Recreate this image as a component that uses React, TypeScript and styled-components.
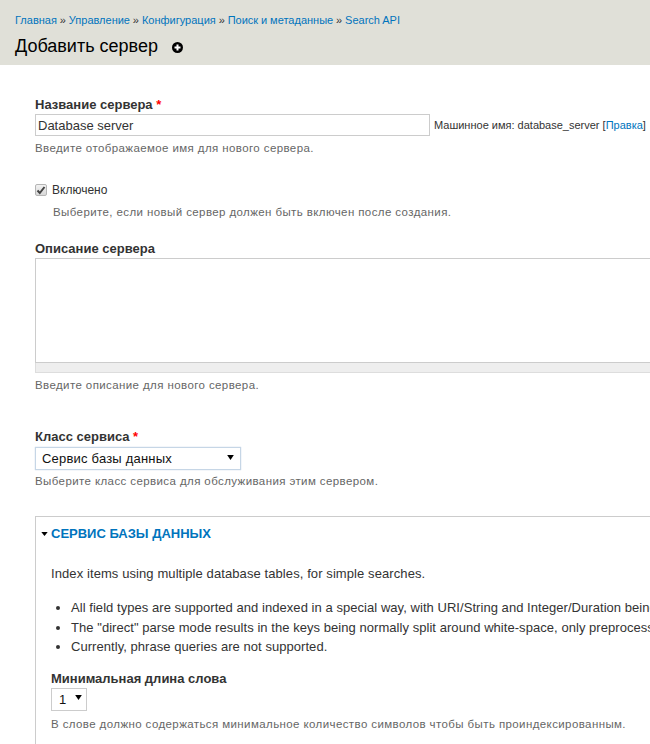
import React from "react";
import styled, { createGlobalStyle } from "styled-components";

const GlobalStyle = createGlobalStyle`
  html, body {
    margin: 0;
    padding: 0;
    background: #fff;
    overflow: hidden;
  }
  body {
    font-family: "Liberation Sans", Arial, sans-serif;
    color: #333;
  }
`;

const Page = styled.div`
  width: 650px;
  height: 744px;
  overflow: hidden;
`;

const Header = styled.header`
  height: 65px;
  box-sizing: border-box;
  background: #e0e0d8;
  padding: 13px 0 0 15px;
`;

const Breadcrumb = styled.div`
  font-size: 11px;
  line-height: 14px;
  color: #333;
  word-spacing: -0.15px;
  white-space: nowrap;
`;

const Link = styled.a`
  color: #0074bd;
  text-decoration: none;
`;

const TitleRow = styled.div`
  display: flex;
  align-items: center;
  gap: 14px;
  margin-top: 7px;
`;

const Title = styled.h1`
  margin: 0;
  font-size: 18px;
  font-weight: 400;
  line-height: 24px;
  color: #000;
`;

const Shortcut = styled.svg`
  width: 11px;
  height: 11px;
  margin-top: 3px;
`;

const Content = styled.main`
  padding: 32px 0 0 35px;
  width: 1000px;
`;

const Field = styled.div<{ $gap?: number }>`
  margin-bottom: ${(p) => p.$gap ?? 0}px;
`;

const Label = styled.label`
  display: block;
  font-size: 13px;
  line-height: 15px;
  font-weight: 700;
  color: #333;
`;

const Required = styled.span`
  color: #f00;
`;

const Inline = styled.div`
  display: flex;
  align-items: center;
  gap: 4px;
  margin-top: 2px;
`;

const TextInput = styled.input`
  width: 395px;
  height: 22px;
  box-sizing: border-box;
  border: 1px solid #ccc;
  padding: 0 2px;
  font: 13px "Liberation Sans", Arial, sans-serif;
  color: #333;
  outline: none;
`;

const MachineName = styled.span`
  font-size: 11px;
  color: #333;
  white-space: nowrap;
`;

const Help = styled.div<{ $indent?: number; $top?: number }>`
  font-size: 11.5px;
  line-height: 14px;
  letter-spacing: 0.4px;
  color: #666;
  margin-top: ${(p) => p.$top ?? 5}px;
  margin-left: ${(p) => p.$indent ?? 0}px;
  white-space: nowrap;
`;

const CheckRow = styled.div`
  display: flex;
  align-items: center;
  gap: 5px;
  font-size: 12px;
  line-height: 14px;
  color: #333;
  margin-bottom: 8px;
`;

const CheckBox = styled.span`
  width: 12px;
  height: 12px;
  box-sizing: border-box;
  border: 1px solid #b5b5b5;
  border-radius: 2px;
  background: linear-gradient(#f2f2f2, #d8d8d8);
  display: flex;
  align-items: center;
  justify-content: center;
`;

const TextArea = styled.textarea`
  display: block;
  width: 900px;
  height: 105px;
  box-sizing: border-box;
  border: 1px solid #ccc;
  margin: 2px 0 0;
  padding: 0;
  resize: none;
  outline: none;
`;

const Grip = styled.div`
  width: 900px;
  height: 10px;
  box-sizing: border-box;
  background: #eee;
  border: 1px solid #ddd;
  border-top: none;
`;

const Select = styled.div<{ $width: number; $focus?: boolean; $left: number; $right: number; $top: number }>`
  width: ${(p) => p.$width}px;
  height: 23px;
  box-sizing: border-box;
  border: 1px solid ${(p) => (p.$focus ? "#c6d6e6" : "#ccc")};
  display: flex;
  align-items: center;
  justify-content: space-between;
  padding: 0 ${(p) => p.$right}px 0 ${(p) => p.$left}px;
  font-size: 13px;
  letter-spacing: 0.2px;
  color: #111;
  margin-top: ${(p) => p.$top}px;
  ${(p) => (p.$focus ? "box-shadow: 0 0 1px #b8cbe0;" : "")}
`;

const Caret = styled.svg`
  width: 7px;
  height: 5px;
  margin-bottom: 3px;
`;

const Fieldset = styled.section`
  border: 1px solid #ccc;
  width: 900px;
  box-sizing: border-box;
  padding: 0 15px 20px;
  margin-top: 28px;
`;

const Legend = styled.div`
  display: flex;
  align-items: center;
  gap: 3px;
  height: 33px;
  margin-left: -10px;
  font-size: 13px;
  font-weight: 700;
  color: #0074bd;
`;

const LegendCaret = styled.svg`
  width: 7px;
  height: 4px;
`;

const Body = styled.p`
  margin: 16px 0 0;
  font-size: 13px;
  line-height: 16px;
  letter-spacing: 0.09px;
  color: #333;
  white-space: nowrap;
`;

const BulletList = styled.ul`
  margin: 16px 0 0;
  padding: 0 0 0 20px;
  font-size: 13px;
  line-height: 19.5px;
  letter-spacing: 0.05px;
  color: #333;
  white-space: nowrap;
`;

const SubField = styled.div`
  margin-top: 14px;
`;

export default function App() {
  return (
    <Page>
      <GlobalStyle />
      <Header>
        <Breadcrumb>
          <Link href="#">Главная</Link> » <Link href="#">Управление</Link> »{" "}
          <Link href="#">Конфигурация</Link> » <Link href="#">Поиск и метаданные</Link> »{" "}
          <Link href="#">Search API</Link>
        </Breadcrumb>
        <TitleRow>
          <Title>Добавить сервер</Title>
          <Shortcut viewBox="0 0 11 11">
            <circle cx="5.5" cy="5.5" r="5.5" fill="#000" />
            <path d="M4.5 2.5h2v2h2v2h-2v2h-2v-2h-2v-2h2z" fill="#fff" />
          </Shortcut>
        </TitleRow>
      </Header>
      <Content>
        <Field $gap={28}>
          <Label>
            Название сервера <Required>*</Required>
          </Label>
          <Inline>
            <TextInput readOnly value="Database server" />
            <MachineName>
              Машинное имя: database_server [<Link href="#">Правка</Link>]
            </MachineName>
          </Inline>
          <Help>Введите отображаемое имя для нового сервера.</Help>
        </Field>
        <Field $gap={22}>
          <CheckRow>
            <CheckBox>
              <svg width="10" height="10" viewBox="0 0 10 10">
                <path d="M1.5 5.5l2.3 2.5L8.5 2" fill="none" stroke="#444" strokeWidth="2" />
              </svg>
            </CheckBox>
            Включено
          </CheckRow>
          <Help $indent={18} $top={0}>Выберите, если новый сервер должен быть включен после создания.</Help>
        </Field>
        <Field $gap={37}>
          <Label>Описание сервера</Label>
          <TextArea readOnly />
          <Grip />
          <Help>Введите описание для нового сервера.</Help>
        </Field>
        <Field>
          <Label>
            Класс сервиса <Required>*</Required>
          </Label>
          <Select $width={206} $focus $left={6} $right={6} $top={3}>
            Сервис базы данных
            <Caret viewBox="0 0 8 6">
              <path d="M0 0h8L4 6z" fill="#000" />
            </Caret>
          </Select>
          <Help $top={4}>Выберите класс сервиса для обслуживания этим сервером.</Help>
        </Field>
        <Fieldset>
          <Legend>
            <LegendCaret viewBox="0 0 8 5">
              <path d="M0 0h8L4 5z" fill="#000" />
            </LegendCaret>
            СЕРВИС БАЗЫ ДАННЫХ
          </Legend>
          <Body>Index items using multiple database tables, for simple searches.</Body>
          <BulletList>
            <li>All field types are supported and indexed in a special way, with URI/String and Integer/Duration being equivalent.</li>
            <li>The "direct" parse mode results in the keys being normally split around white-space, only preprocessing might differ.</li>
            <li>Currently, phrase queries are not supported.</li>
          </BulletList>
          <SubField>
            <Label>Минимальная длина слова</Label>
            <Select $width={36} $left={7} $right={4} $top={2}>
              1
              <Caret viewBox="0 0 8 6">
                <path d="M0 0h8L4 6z" fill="#000" />
              </Caret>
            </Select>
            <Help $top={6}>В слове должно содержаться минимальное количество символов чтобы быть проиндексированным.</Help>
          </SubField>
        </Fieldset>
      </Content>
    </Page>
  );
}
